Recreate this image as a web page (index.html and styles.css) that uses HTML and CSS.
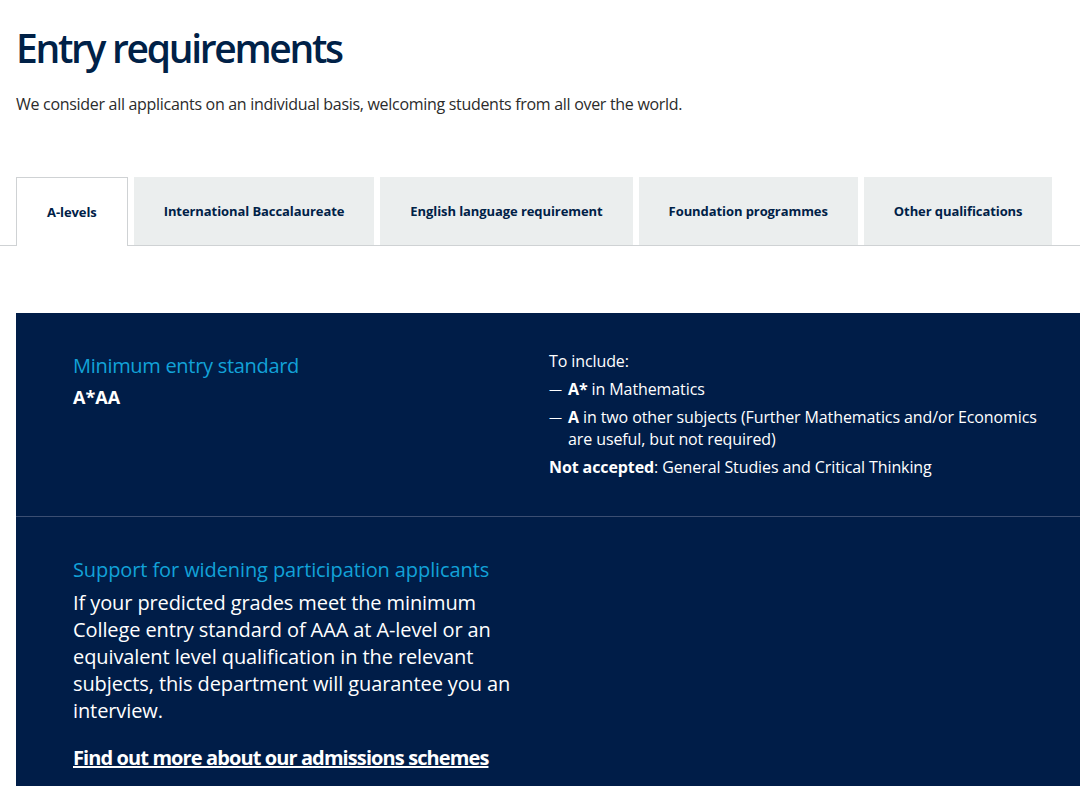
FILE: index.html
```html
<!DOCTYPE html>
<html lang="en">

<head>
    <meta charset="UTF-8">
    <meta name="viewport" content="width=device-width, initial-scale=1.0">
    <title>Entry requirements</title>
    <link rel="stylesheet" href="styles.css">
</head>

<body>

    <div class="intro">
        <h1>Entry requirements</h1>
        <p class="lead">We consider all applicants on an individual basis, welcoming students from all over the world.</p>
    </div>

    <ul class="tabs">
        <li class="tab active">A-levels</li>
        <li class="tab">International Baccalaureate</li>
        <li class="tab">English language requirement</li>
        <li class="tab">Foundation programmes</li>
        <li class="tab">Other qualifications</li>
    </ul>

    <div class="panel">
        <div class="panel-row">
            <div class="col-left">
                <h3>Minimum entry standard</h3>
                <p class="grade">A*AA</p>
            </div>
            <div class="col-right">
                <p>To include:</p>
                <ul class="dash-list">
                    <li><span class="dash">&mdash;</span><span><strong>A*</strong> in Mathematics</span></li>
                    <li><span class="dash">&mdash;</span><span><strong>A</strong> in two other subjects (Further Mathematics and/or Economics are useful, but not required)</span></li>
                </ul>
                <p><strong>Not accepted</strong>: General Studies and Critical Thinking</p>
            </div>
        </div>

        <div class="panel-row support">
            <div class="col-left">
                <h3>Support for widening participation applicants</h3>
                <p class="big">If your predicted grades meet the minimum College entry standard of AAA at A-level or an equivalent level qualification in the relevant subjects, this department will guarantee you an interview.</p>
                <a class="more" href="#">Find out more about our admissions schemes</a>
            </div>
        </div>
    </div>

</body>

</html>
```

FILE: styles.css
```css
* {
    margin: 0;
    padding: 0;
    box-sizing: border-box;
}

body {
    font-family: "Open Sans", "Noto Sans", Arial, sans-serif;
    background-color: #fff;
    color: #2b2b2b;
    overflow: hidden;
}

.intro {
    padding: 24px 16px 0;
}

h1 {
    font-size: 39px;
    font-weight: 600;
    color: #002147;
    letter-spacing: -2.3px;
    line-height: 48px;
}

.lead {
    margin-top: 20px;
    font-size: 16px;
    line-height: 24px;
    letter-spacing: -0.3px;
}

.tabs {
    list-style: none;
    display: flex;
    gap: 6px;
    margin-top: 61px;
    padding-left: 16px;
    border-bottom: 1px solid #cfd2d4;
}

.tab {
    height: 68px;
    padding: 0 30px;
    display: flex;
    align-items: center;
    font-size: 13px;
    font-weight: 700;
    color: #002147;
    background-color: #ebeeee;
    margin-bottom: -1px;
    letter-spacing: -0.08px;
}

.tab.active {
    background-color: #fff;
    border: 1px solid #cfd2d4;
    border-bottom: none;
    height: 69px;
}

.panel {
    margin: 67px 0 0 16px;
    background-color: #001d48;
    color: #fff;
}

.panel-row {
    display: grid;
    grid-template-columns: 450px 500px;
    column-gap: 26px;
    padding: 40px 57px 38px;
    border-bottom: 1px solid #3b4e72;
}

.panel-row.support {
    padding-top: 40px;
    border-bottom: none;
}

h3 {
    font-size: 20px;
    font-weight: 400;
    color: #12a2d8;
    line-height: 26px;
    letter-spacing: -0.3px;
}

.support h3 {
    letter-spacing: -0.1px;
}

.grade {
    font-size: 18px;
    font-weight: 700;
    margin-top: 6px;
}

.col-right {
    font-size: 16px;
    line-height: 22px;
    letter-spacing: -0.1px;
    margin-top: -3px;
}

.col-right p {
    margin: 0;
}

.dash-list {
    list-style: none;
    margin: 6px 0;
}

.dash-list li {
    display: flex;
    margin-bottom: 6px;
}

.dash {
    flex: none;
    width: 19px;
    font-size: 13px;
}

.big {
    font-size: 20px;
    line-height: 27px;
    letter-spacing: -0.1px;
    margin-top: 6px;
}

.more {
    display: inline-block;
    margin-top: 20px;
    font-size: 20px;
    font-weight: 700;
    color: #fff;
    letter-spacing: -0.9px;
}
```
